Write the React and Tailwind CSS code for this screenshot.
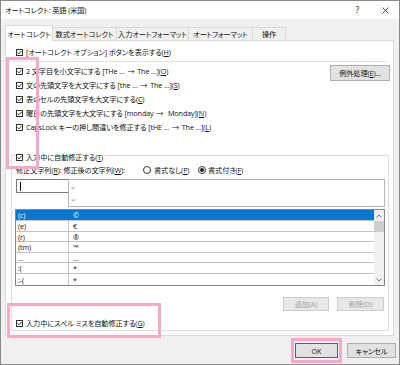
import React from "react";

const F = "font-['Open_Sans','Noto_Sans_CJK_JP',sans-serif] [font-feature-settings:'palt']";

function U({ children }) {
  return <span className="underline underline-offset-[1px] decoration-[0.5px]">{children}</span>;
}

function A() {
  return <span className="[font-feature-settings:normal] px-[1px]">→</span>;
}

function Check() {
  return (
    <span className="w-[7px] h-[7px] border border-[#333] bg-white flex items-center justify-center shrink-0">
      <svg width="5" height="5" viewBox="0 0 5 5">
        <path d="M0.4 2.4 L1.9 3.9 L4.6 0.9" fill="none" stroke="#222" strokeWidth="0.9" />
      </svg>
    </span>
  );
}

function CheckRow({ children, h = "h-[14px]" }) {
  return (
    <div className={`${h} flex items-center gap-[3px] whitespace-nowrap`}>
      <Check />
      <span className="whitespace-pre">{children}</span>
    </div>
  );
}

function Radio({ on }) {
  return (
    <span className="w-[8px] h-[8px] rounded-full border border-[#333] bg-white flex items-center justify-center shrink-0">
      {on && <span className="w-[4px] h-[4px] rounded-full bg-[#222]" />}
    </span>
  );
}

const rows = [
  ["(c)", "©", "h-[11px] border-b", true],
  ["(e)", "€", "h-[11px] border-b", false],
  ["(r)", "®", "h-[10px] border-b", false],
  ["(tm)", "™", "h-[11px] border-b", false],
  ["...", "…", "h-[10px] border-b", false],
  [":(", "*", "h-[11px] border-b", false],
  [":-(", "*", "h-[11px]", false],
];

const tab = "h-[13px] border border-l-0 border-b-0 border-[#d9d9d9] flex items-center justify-center whitespace-nowrap";

export default function App() {
  return (
    <div className={`relative w-[400px] h-[365px] border border-[#8a8a8a] bg-[#f0f0f0] flex flex-col text-[7.2px] leading-[10px] tracking-[-0.1px] text-[#111] ${F}`}>
      {/* title bar */}
      <div className="h-[18px] bg-white flex items-center pl-[4px] pr-[10px] shrink-0">
        <span className="flex-1">オートコレクト: 英語 (米国)</span>
        <span className="text-[8.5px] mr-[23px]">?</span>
        <svg width="7" height="7" viewBox="0 0 7 7">
          <path d="M0.5 0.5 L6.5 6.5 M6.5 0.5 L0.5 6.5" stroke="#222" strokeWidth="0.8" />
        </svg>
      </div>

      {/* tabs */}
      <div className="mt-[6px] h-[15px] flex items-end pl-[4px] shrink-0">
        <div className="relative z-10 -mb-px w-[48px] h-[16px] bg-white border border-b-0 border-[#d9d9d9] flex items-center justify-center whitespace-nowrap">
          オートコレクト
        </div>
        <div className={`w-[64px] ${tab}`}>数式オートコレクト</div>
        <div className={`w-[72px] ${tab}`}>入力オートフォーマット</div>
        <div className={`w-[64px] ${tab}`}>オートフォーマット</div>
        <div className={`w-[33px] ${tab}`}>操作</div>
      </div>

      {/* panel */}
      <div className="ml-[4px] mr-[5px] h-[296px] shrink-0 bg-white border border-[#d9d9d9] flex flex-col">
        <div className="mt-[4px] pl-[10px]">
          <CheckRow>[オートコレクト オプション] ボタンを表示する(<U>H</U>)</CheckRow>
        </div>
        <div className="mt-[2px] h-px bg-[#e3e3e3] ml-[6px] mr-[5px]" />
        <div className="mt-[2px] flex">
          <div className="pl-[10px] flex flex-col">
            <CheckRow>2 文字目を小文字にする [THe ... <A /> The ...](<U>O</U>)</CheckRow>
            <CheckRow>文の先頭文字を大文字にする [the ... <A /> The ...](<U>S</U>)</CheckRow>
            <CheckRow>表のセルの先頭文字を大文字にする(<U>C</U>)</CheckRow>
            <CheckRow>曜日の先頭文字を大文字にする [monday <A />  Monday](<U>N</U>)</CheckRow>
            <CheckRow>CapsLock キーの押し間違いを修正する [tHE ... <A /> The ...](<U>L</U>)</CheckRow>
          </div>
          <div className="ml-auto mr-[3px] mt-[1px] w-[60px] h-[16px] bg-[#e1e1e1] border border-[#adadad] flex items-center justify-center whitespace-nowrap">
            例外処理(<U>E</U>)...
          </div>
        </div>

        <fieldset className="mt-[14px] ml-[5px] mr-[4px] border border-[#dcdcdc] pl-[4px] pr-[3px] pb-[1px]">
          <legend className="pr-[2px]">
            <div className="h-[14px] pt-[4px] flex items-center gap-[3px] whitespace-nowrap">
              <Check />
              <span>入力中に自動修正する(<U>T</U>)</span>
            </div>
          </legend>
          <div className="mt-[2px] h-[12px] flex items-center whitespace-nowrap">
            <span className="w-[127px]">修正文字列(<U>R</U>): 修正後の文字列(<U>W</U>):</span>
            <div className="w-[55px] flex items-center gap-[3px]">
              <Radio />
              <span>書式なし(<U>P</U>)</span>
            </div>
            <div className="flex items-center gap-[2px]">
              <Radio on />
              <span>書式付き(<U>F</U>)</span>
            </div>
          </div>
          <div className="mt-[3px] flex">
            <div className="w-[53px] h-[14px] border border-[#7a7a7a] bg-white flex items-center pl-[3px] shrink-0">
              <span className="w-px h-[9px] bg-black" />
            </div>
            <div className="-ml-px flex-1 h-[28px] border border-[#b4b4b4] bg-white flex flex-col pl-[2px] pt-[2px] text-[#a0a0a0] text-[6px] leading-[12px]">
              <span>↵</span>
              <span>↵</span>
            </div>
          </div>
          <div className="mt-[2px] -ml-px h-[77px] border border-[#828790] flex">
            <div className="flex-1 flex flex-col overflow-hidden">
              {rows.map(([a, b, cls, sel], i) => (
                <div
                  key={i}
                  className={`${cls} border-[#c4c4c4] flex shrink-0 ${sel ? "bg-[#0078d7] text-white" : "bg-white"}`}
                >
                  <div className={`w-[53px] pl-[2px] flex items-center ${sel ? "" : "border-r border-[#c4c4c4]"}`}>{a}</div>
                  <div className="pl-[4px] flex items-center">{b}</div>
                </div>
              ))}
            </div>
            <div className="w-[10px] bg-[#f0f0f0] flex flex-col shrink-0">
              <div className="h-[11px] flex items-center justify-center">
                <svg width="6" height="4" viewBox="0 0 6 4">
                  <path d="M0.5 3.5 L3 1 L5.5 3.5" fill="none" stroke="#606060" strokeWidth="0.9" />
                </svg>
              </div>
              <div className="h-[11px] bg-[#cdcdcd]" />
              <div className="flex-1" />
              <div className="h-[10px] flex items-center justify-center">
                <svg width="6" height="4" viewBox="0 0 6 4">
                  <path d="M0.5 0.5 L3 3 L5.5 0.5" fill="none" stroke="#606060" strokeWidth="0.9" />
                </svg>
              </div>
            </div>
          </div>
          <div className="mt-[11px] mr-[1px] flex justify-end gap-[8px] text-[#a0a0a0]">
            <div className="w-[46px] h-[14px] bg-[#e8e8e8] border border-[#cccccc] flex items-center justify-center">追加(A)</div>
            <div className="w-[47px] h-[14px] bg-[#e8e8e8] border border-[#cccccc] flex items-center justify-center">削除(D)</div>
          </div>
          <div className="mt-[6px]">
            <CheckRow h="h-[12px]">入力中にスペル ミスを自動修正する(<U>G</U>)</CheckRow>
          </div>
        </fieldset>
      </div>

      {/* bottom buttons */}
      <div className="mt-[7px] pr-[3px] flex justify-end gap-[9px]">
        <div className="w-[43px] h-[15px] bg-[#e1e1e1] border border-[#0078d7] flex items-center justify-center">OK</div>
        <div className="w-[49px] h-[15px] bg-[#e1e1e1] border border-[#adadad] flex items-center justify-center">キャンセル</div>
      </div>

      {/* pink annotation frames */}
      <div className="absolute left-[5px] top-[56px] w-[33px] h-[112px] border-[3px] border-[#f5a8c8]" />
      <div className="absolute left-[6px] top-[302px] w-[154px] h-[35px] border-[3px] border-[#f5a8c8]" />
      <div className="absolute left-[290px] top-[337px] w-[51px] h-[25px] border-[3px] border-[#f5a8c8]" />
    </div>
  );
}
